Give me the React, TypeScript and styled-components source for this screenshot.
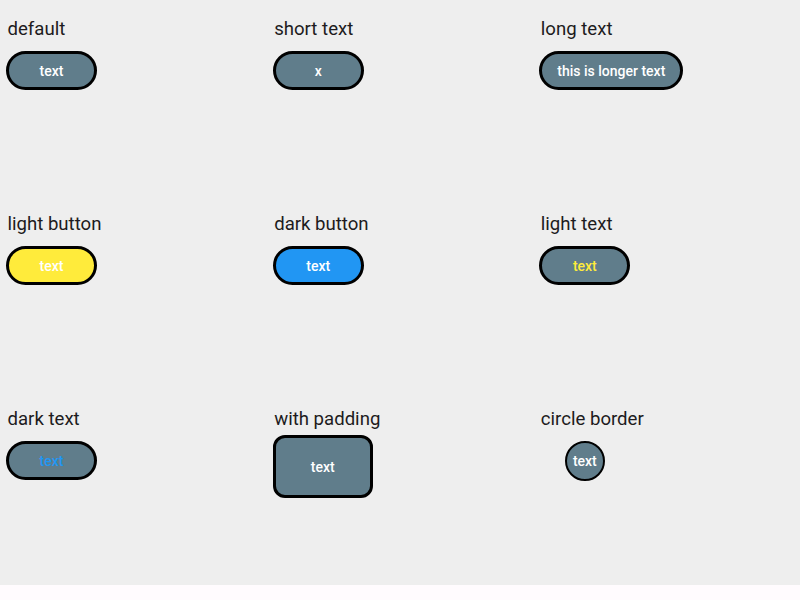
import React from "react";
import styled, { createGlobalStyle } from "styled-components";

const Global = createGlobalStyle`
  html, body { margin: 0; padding: 0; background: #fffbfe; }
  body { font-family: Roboto, "Noto Sans", sans-serif; }
`;

const Page = styled.div`
  width: 800px;
  height: 600px;
  background: #fffbfe;
`;

const Grid = styled.div`
  display: grid;
  grid-template-columns: repeat(3, 1fr);
  grid-template-rows: repeat(3, 195px);
  background: #eeeeee;
`;

const Cell = styled.div`
  display: flex;
  flex-direction: column;
  align-items: flex-start;
  padding: 18px 0 0 6px;
`;

const Label = styled.div`
  font-size: 18.6px;
  line-height: 22px;
  color: #1d1b20;
  margin-left: 1.5px;
  margin-bottom: 5px;
`;

const Pill = styled.button<{ $bg?: string; $fg?: string }>`
  box-sizing: border-box;
  margin: 6px 0;
  height: 39px;
  min-width: 91px;
  padding: 0 15px;
  border: 3px solid #000;
  border-radius: 20px;
  background: ${(p) => p.$bg ?? "#607d8b"};
  color: ${(p) => p.$fg ?? "#ffffff"};
  font-family: Roboto, sans-serif;
  font-size: 14px;
  font-weight: 500;
  display: flex;
  align-items: center;
  justify-content: center;
  cursor: pointer;
`;

const PaddedButton = styled.button`
  box-sizing: border-box;
  width: 100px;
  height: 63px;
  margin-top: 0;
  border: 3px solid #000;
  border-radius: 12px;
  background: #607d8b;
  color: #fff;
  font-family: Roboto, sans-serif;
  font-size: 14px;
  font-weight: 500;
  padding-top: 1px;
  cursor: pointer;
`;

const CircleSlot = styled.div`
  width: 91px;
  height: 51px;
  display: flex;
  align-items: center;
  justify-content: center;
`;

const CircleButton = styled.button`
  box-sizing: border-box;
  width: 40px;
  height: 40px;
  padding: 0;
  border: 2px solid #000;
  border-radius: 50%;
  background: #607d8b;
  color: #fff;
  font-family: Roboto, sans-serif;
  font-size: 14px;
  font-weight: 500;
  cursor: pointer;
`;

export default function App() {
  return (
    <Page>
      <Global />
      <Grid>
        <Cell>
          <Label>default</Label>
          <Pill>text</Pill>
        </Cell>
        <Cell>
          <Label>short text</Label>
          <Pill>x</Pill>
        </Cell>
        <Cell>
          <Label>long text</Label>
          <Pill>this is longer text</Pill>
        </Cell>
        <Cell>
          <Label>light button</Label>
          <Pill $bg="#ffeb3b">text</Pill>
        </Cell>
        <Cell>
          <Label>dark button</Label>
          <Pill $bg="#2196f3">text</Pill>
        </Cell>
        <Cell>
          <Label>light text</Label>
          <Pill $fg="#ffeb3b">text</Pill>
        </Cell>
        <Cell>
          <Label>dark text</Label>
          <Pill $fg="#2196f3">text</Pill>
        </Cell>
        <Cell>
          <Label>with padding</Label>
          <PaddedButton>text</PaddedButton>
        </Cell>
        <Cell>
          <Label>circle border</Label>
          <CircleSlot>
            <CircleButton>text</CircleButton>
          </CircleSlot>
        </Cell>
      </Grid>
    </Page>
  );
}
